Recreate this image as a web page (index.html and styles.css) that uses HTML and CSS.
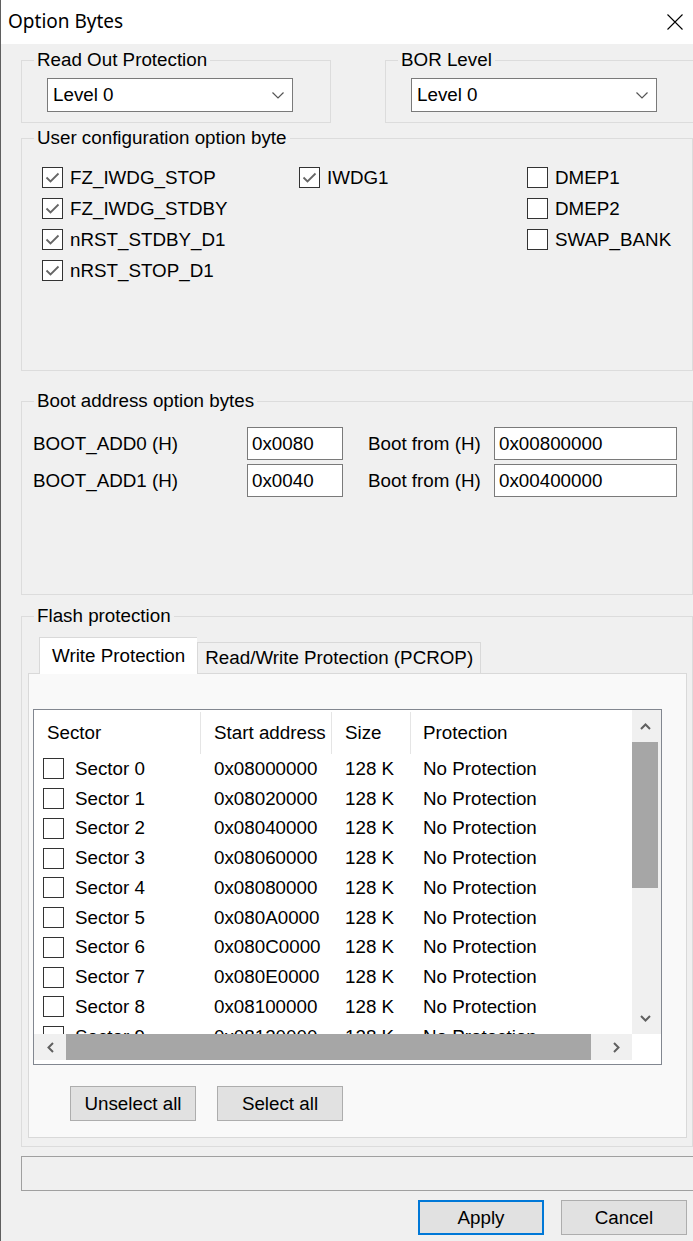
FILE: index.html
```html
<!DOCTYPE html>
<html lang="en">
<head>
  <meta charset="UTF-8" />
  <meta name="viewport" content="width=device-width, initial-scale=1.0"/>
  <title>Option Bytes</title>
  <link rel="stylesheet" href="styles.css">
</head>
<body>
  <div class="titlebar">
    <span class="title">Option Bytes</span>
    <svg class="close" width="16" height="16" viewBox="0 0 16 16"><path d="M0.5 0.5L15.5 15.5M15.5 0.5L0.5 15.5" stroke="#000" stroke-width="1.1" fill="none"/></svg>
  </div>

  <div class="dialog">
    <div class="top-row">
      <fieldset class="group group-small">
        <legend>Read Out Protection</legend>
        <div class="group-body">
          <div class="combo">
            <span>Level 0</span>
            <svg width="12" height="7" viewBox="0 0 12 7"><path d="M0.5 0.5L6 6L11.5 0.5" stroke="#555" stroke-width="1.2" fill="none"/></svg>
          </div>
        </div>
      </fieldset>
      <fieldset class="group group-small">
        <legend>BOR Level</legend>
        <div class="group-body">
          <div class="combo">
            <span>Level 0</span>
            <svg width="12" height="7" viewBox="0 0 12 7"><path d="M0.5 0.5L6 6L11.5 0.5" stroke="#555" stroke-width="1.2" fill="none"/></svg>
          </div>
        </div>
      </fieldset>
    </div>

    <!-- option bits -->
    <fieldset class="group group-user">
      <legend>User configuration option byte</legend>
      <div class="group-body opt-cols">
        <div class="opt-col col-1">
          <label class="chk"><span class="box checked"><svg viewBox="0 0 19 19"><path d="M3.5 9.5L7.5 13.5L15.5 5.5" stroke="#666" stroke-width="1.8" fill="none"/></svg></span>FZ_IWDG_STOP</label>
          <label class="chk"><span class="box checked"><svg viewBox="0 0 19 19"><path d="M3.5 9.5L7.5 13.5L15.5 5.5" stroke="#666" stroke-width="1.8" fill="none"/></svg></span>FZ_IWDG_STDBY</label>
          <label class="chk"><span class="box checked"><svg viewBox="0 0 19 19"><path d="M3.5 9.5L7.5 13.5L15.5 5.5" stroke="#666" stroke-width="1.8" fill="none"/></svg></span>nRST_STDBY_D1</label>
          <label class="chk"><span class="box checked"><svg viewBox="0 0 19 19"><path d="M3.5 9.5L7.5 13.5L15.5 5.5" stroke="#666" stroke-width="1.8" fill="none"/></svg></span>nRST_STOP_D1</label>
        </div>
        <div class="opt-col col-2">
          <label class="chk"><span class="box checked"><svg viewBox="0 0 19 19"><path d="M3.5 9.5L7.5 13.5L15.5 5.5" stroke="#666" stroke-width="1.8" fill="none"/></svg></span>IWDG1</label>
        </div>
        <div class="opt-col">
          <label class="chk"><span class="box"></span>DMEP1</label>
          <label class="chk"><span class="box"></span>DMEP2</label>
          <label class="chk"><span class="box"></span>SWAP_BANK</label>
        </div>
      </div>
    </fieldset>

    <fieldset class="group group-boot">
      <legend>Boot address option bytes</legend>
      <div class="group-body boot-grid">
        <span>BOOT_ADD0 (H)</span>
        <div class="field">0x0080</div>
        <span class="from">Boot from (H)</span>
        <div class="field">0x00800000</div>
        <span>BOOT_ADD1 (H)</span>
        <div class="field">0x0040</div>
        <span class="from">Boot from (H)</span>
        <div class="field">0x00400000</div>
      </div>
    </fieldset>

    <fieldset class="group group-flash">
      <legend>Flash protection</legend>
      <div class="group-body">
        <div class="tabs">
          <div class="tab active">Write Protection</div>
          <div class="tab">Read/Write Protection (PCROP)</div>
        </div>
        <div class="tab-panel">
          <div class="list">
            <div class="list-main">
              <div class="list-head">
                <div class="c-sector">Sector</div>
                <div class="c-addr">Start address</div>
                <div class="c-size">Size</div>
                <div class="c-prot">Protection</div>
              </div>
              <div class="list-body">
                <div class="list-row"><div class="c-sector"><span class="box"></span>Sector 0</div><div class="c-addr">0x08000000</div><div class="c-size">128 K</div><div class="c-prot">No Protection</div></div>
                <div class="list-row"><div class="c-sector"><span class="box"></span>Sector 1</div><div class="c-addr">0x08020000</div><div class="c-size">128 K</div><div class="c-prot">No Protection</div></div>
                <div class="list-row"><div class="c-sector"><span class="box"></span>Sector 2</div><div class="c-addr">0x08040000</div><div class="c-size">128 K</div><div class="c-prot">No Protection</div></div>
                <div class="list-row"><div class="c-sector"><span class="box"></span>Sector 3</div><div class="c-addr">0x08060000</div><div class="c-size">128 K</div><div class="c-prot">No Protection</div></div>
                <div class="list-row"><div class="c-sector"><span class="box"></span>Sector 4</div><div class="c-addr">0x08080000</div><div class="c-size">128 K</div><div class="c-prot">No Protection</div></div>
                <div class="list-row"><div class="c-sector"><span class="box"></span>Sector 5</div><div class="c-addr">0x080A0000</div><div class="c-size">128 K</div><div class="c-prot">No Protection</div></div>
                <div class="list-row"><div class="c-sector"><span class="box"></span>Sector 6</div><div class="c-addr">0x080C0000</div><div class="c-size">128 K</div><div class="c-prot">No Protection</div></div>
                <div class="list-row"><div class="c-sector"><span class="box"></span>Sector 7</div><div class="c-addr">0x080E0000</div><div class="c-size">128 K</div><div class="c-prot">No Protection</div></div>
                <div class="list-row"><div class="c-sector"><span class="box"></span>Sector 8</div><div class="c-addr">0x08100000</div><div class="c-size">128 K</div><div class="c-prot">No Protection</div></div>
                <div class="list-row"><div class="c-sector"><span class="box"></span>Sector 9</div><div class="c-addr">0x08120000</div><div class="c-size">128 K</div><div class="c-prot">No Protection</div></div>
              </div>
            </div>
            <div class="vscroll">
              <div class="sb-btn"><svg width="11" height="7" viewBox="0 0 11 7"><path d="M1 6L5.5 1.5L10 6" stroke="#606060" stroke-width="2" fill="none"/></svg></div>
              <div class="vthumb"></div>
              <div class="vtrack"></div>
              <div class="sb-btn"><svg width="11" height="7" viewBox="0 0 11 7"><path d="M1 1L5.5 5.5L10 1" stroke="#606060" stroke-width="2" fill="none"/></svg></div>
            </div>
            <div class="hscroll">
              <div class="sb-btn"><svg width="7" height="11" viewBox="0 0 7 11"><path d="M6 1L1.5 5.5L6 10" stroke="#606060" stroke-width="2" fill="none"/></svg></div>
              <div class="hthumb"></div>
              <div class="htrack"></div>
              <div class="sb-btn"><svg width="7" height="11" viewBox="0 0 7 11"><path d="M1 1L5.5 5.5L1 10" stroke="#606060" stroke-width="2" fill="none"/></svg></div>
            </div>
            <div class="corner"></div>
          </div>
          <div class="panel-buttons">
            <button class="btn">Unselect all</button>
            <button class="btn">Select all</button>
          </div>
        </div>
      </div>
    </fieldset>

    <div class="status"></div>

    <div class="footer">
      <button class="btn default">Apply</button>
      <button class="btn">Cancel</button>
    </div>
  </div>
</body>
</html>
```

FILE: styles.css
```css
* {
  box-sizing: border-box;
}
html, body {
  margin: 0;
  height: 100%;
}
body {
  width: 693px;
  height: 1241px;
  overflow: hidden;
  background: #f0f0f0;
  border-left: 1px solid #5f5f5f;
  font-family: "Liberation Sans", Arial, sans-serif;
  font-size: 18.8px;
  color: #000;
}
.titlebar {
  height: 44px;
  background: #fff;
  display: flex;
  align-items: center;
  justify-content: space-between;
  padding: 0 10px 0 7px;
}
.title {
  font-family: "Noto Sans", "Open Sans", sans-serif;
  font-size: 19px;
  margin-top: -2px;
}
.close {
  margin-top: -1px;
}
.dialog {
  padding: 7px 0 0 20px;
  width: 692px;
}

/* group boxes */
.group {
  margin: 0;
  padding: 0;
  border: 1px solid #dcdcdc;
  min-width: 0;
}
.group legend {
  margin-left: 12px;
  padding: 0 3px;
  line-height: 18px;
  height: 18px;
}
.top-row {
  display: flex;
  gap: 54px;
  width: 720px;
}
.group-small {
  width: 310px;
  flex-shrink: 0;
}
.group-small .group-body {
  padding: 9px 0 10px 25px;
}
.combo {
  width: 246px;
  height: 34px;
  background: #fff;
  border: 1px solid #7a7a7a;
  display: flex;
  align-items: center;
  justify-content: space-between;
  padding: 0 8px 0 5px;
}
.combo svg {
  margin-top: 1px;
}

.group-user {
  margin-top: 6px;
  width: 672px;
}
.opt-cols {
  display: flex;
  padding: 15px 0 84px 20px;
}
.opt-col {
  display: flex;
  flex-direction: column;
}
.col-1 {
  width: 257px;
}
.col-2 {
  width: 228px;
}
.chk {
  height: 31px;
  display: flex;
  align-items: center;
  gap: 7px;
}
.box {
  width: 21px;
  height: 21px;
  flex-shrink: 0;
  border: 1px solid #333;
  background: #fff;
  display: inline-flex;
}
.box svg {
  width: 19px;
  height: 19px;
}

.group-boot {
  margin-top: 21px;
  width: 672px;
}
.boot-grid {
  display: grid;
  grid-template-columns: 214px 96px 151px 183px;
  row-gap: 4px;
  align-items: center;
  padding: 17px 0 97px 11px;
}
.boot-grid .from {
  margin-left: 25px;
}
.field {
  height: 33px;
  background: #fff;
  border: 1px solid #7a7a7a;
  padding: 0 4px;
  display: flex;
  align-items: center;
}

/* flash protection */
.group-flash {
  margin-top: 12px;
  width: 672px;
}
.group-flash .group-body {
  padding: 12px 5px 8px 6px;
}
.tabs {
  display: flex;
  align-items: flex-end;
  margin-left: 11px;
  position: relative;
  z-index: 1;
}
.tab {
  height: 31px;
  padding: 0 7px;
  border: 1px solid #d9d9d9;
  border-bottom: none;
  background: #f0f0f0;
  display: flex;
  align-items: center;
}
.tab.active {
  height: 37px;
  padding: 0 12px;
  background: #fff;
  margin-bottom: -1px;
  border-right: none;
}
.tab-panel {
  border: 1px solid #d9d9d9;
  background: #f9f9f9;
  padding: 35px 24px 16px 4px;
}

.list {
  height: 356px;
  border: 1px solid #828790;
  background: #fff;
  display: grid;
  grid-template-columns: 1fr 29px;
  grid-template-rows: 1fr 26px;
  padding-bottom: 4px;
}
.list-main {
  overflow: hidden;
}
.list-head,
.list-row {
  display: grid;
  grid-template-columns: 167px 131px 79px 1fr;
  white-space: nowrap;
}
.list-head {
  height: 44px;
}
.list-head div {
  padding-left: 13px;
  display: flex;
  align-items: center;
  border-right: 1px solid #e5e5e5;
  margin: 2px 0 0;
}
.list-head div:last-child {
  border-right: none;
  padding-left: 12px;
}
.list-row {
  height: 29.75px;
  align-items: center;
}
.list-row div {
  padding-left: 13px;
}
.list-row .c-sector {
  padding-left: 9px;
  display: flex;
  align-items: center;
  gap: 11px;
}
.list-row .c-prot {
  padding-left: 12px;
}

.vscroll {
  display: flex;
  flex-direction: column;
  background: #f0f0f0;
  padding-right: 3px;
}
.sb-btn {
  display: flex;
  align-items: center;
  justify-content: center;
  flex-shrink: 0;
}
.vscroll .sb-btn {
  height: 32px;
}
.vthumb {
  height: 146px;
  background: #a6a6a6;
}
.vtrack {
  flex: 1;
}
.hscroll {
  display: flex;
  background: #f0f0f0;
}
.hscroll .sb-btn {
  width: 32px;
}
.hthumb {
  width: 525px;
  background: #a6a6a6;
}
.htrack {
  flex: 1;
}
.corner {
  background: #fff;
}

.panel-buttons {
  display: flex;
  gap: 21px;
  margin: 21px 0 0 37px;
}
.btn {
  width: 126px;
  height: 35px;
  background: #e1e1e1;
  border: 1px solid #adadad;
  font-family: "Liberation Sans", Arial, sans-serif;
  font-size: 18.8px;
  color: #000;
  padding: 0;
}

.status {
  margin-top: 9px;
  width: 680px;
  height: 35px;
  border: 1px solid #a0a0a0;
}
.footer {
  display: flex;
  justify-content: flex-end;
  gap: 17px;
  padding-right: 6px;
  margin-top: 9px;
}
.btn.default {
  border: 2px solid #0078d7;
}
```
